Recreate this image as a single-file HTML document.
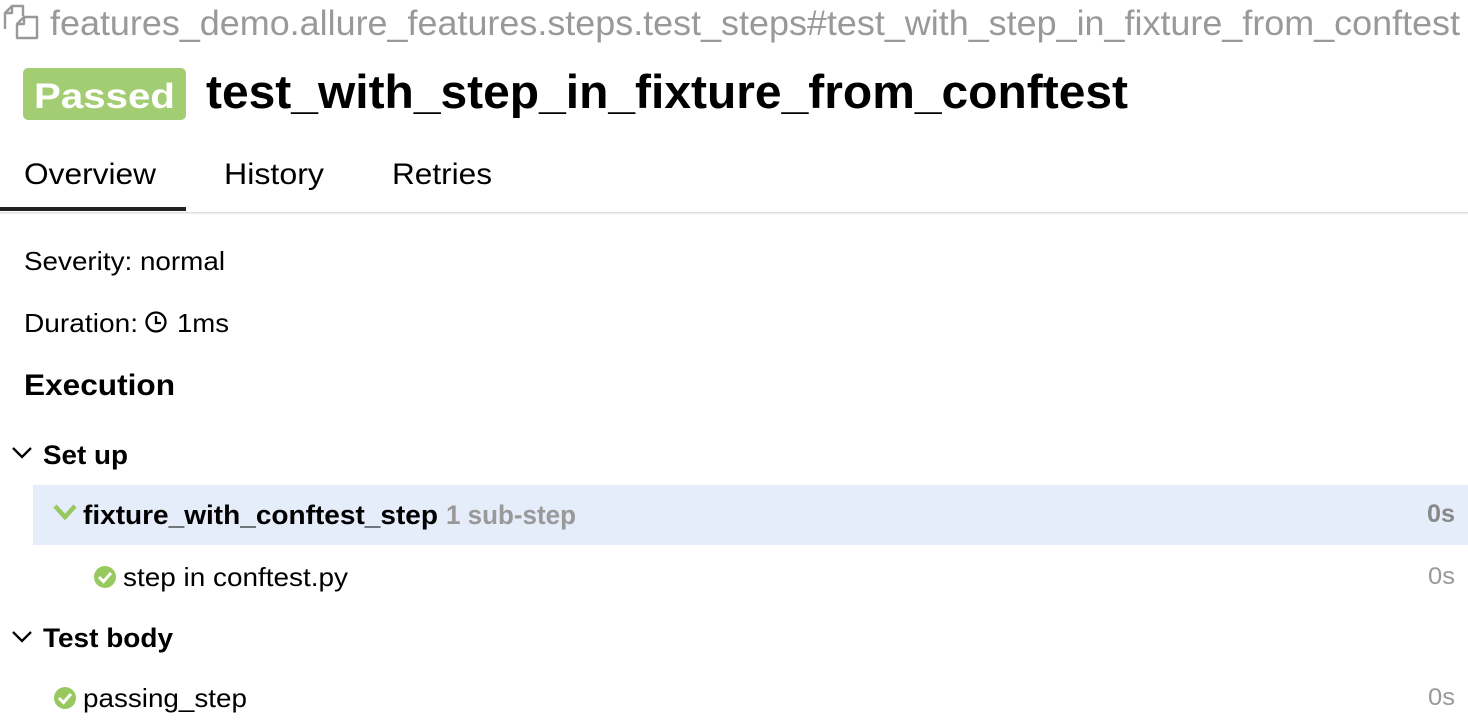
<!DOCTYPE html>
<html><head><style>
body{margin:0;background:#fff;width:1468px;height:728px;overflow:hidden}
svg{display:block;font-family:"Liberation Sans",Arial,sans-serif}
</style></head><body>
<svg width="1468" height="728" viewBox="0 0 1468 728">
<g fill="none" stroke="#999" stroke-width="2.4" stroke-linejoin="round">
<path d="M5 29 V13 L12 6 H23 V16"/>
<path d="M5 13 H12 V6"/>
<path d="M17 38 V24 L24 17 H37 V38 Z"/>
<path d="M17 24 H24 V17"/>
</g>
<text x="50" y="35" font-size="35" fill="#999" textLength="1410" lengthAdjust="spacingAndGlyphs">features_demo.allure_features.steps.test_steps#test_with_step_in_fixture_from_conftest</text>
<rect x="23" y="68" width="163" height="52" rx="5" fill="#a3cd72"/>
<text x="34" y="108" font-size="35" font-weight="bold" fill="#fff" textLength="141" lengthAdjust="spacingAndGlyphs">Passed</text>
<text x="206" y="108" font-size="47" font-weight="bold" fill="#000" textLength="922" lengthAdjust="spacingAndGlyphs">test_with_step_in_fixture_from_conftest</text>
<text x="24" y="184" font-size="30" fill="#000" textLength="132" lengthAdjust="spacingAndGlyphs">Overview</text>
<text x="224" y="184" font-size="30" fill="#000" textLength="100" lengthAdjust="spacingAndGlyphs">History</text>
<text x="392" y="184" font-size="30" fill="#000" textLength="100" lengthAdjust="spacingAndGlyphs">Retries</text>
<rect x="0" y="212" width="1468" height="1.5" fill="#ddd"/>
<rect x="0" y="207" width="186" height="4" fill="#222"/>
<text x="24" y="270" font-size="26" fill="#000" textLength="201" lengthAdjust="spacingAndGlyphs">Severity: normal</text>
<text x="24" y="332" font-size="26" fill="#000" textLength="114" lengthAdjust="spacingAndGlyphs">Duration:</text>
<circle cx="156" cy="322" r="9.5" fill="none" stroke="#000" stroke-width="2.3"/>
<path d="M156 316 V323 H161" fill="none" stroke="#000" stroke-width="2.3"/>
<text x="177" y="332" font-size="26" fill="#000" textLength="52" lengthAdjust="spacingAndGlyphs">1ms</text>
<text x="24" y="395" font-size="30" font-weight="bold" fill="#000" textLength="151" lengthAdjust="spacingAndGlyphs">Execution</text>
<path d="M13 448 L22 457 L31 448" fill="none" stroke="#000" stroke-width="2.3"/>
<text x="43" y="464" font-size="27" font-weight="bold" fill="#000" textLength="85" lengthAdjust="spacingAndGlyphs">Set up</text>
<rect x="33" y="485" width="1435" height="60" fill="#e5ecfa"/>
<path d="M55 506 L65 517 L75 506" fill="none" stroke="#97c95f" stroke-width="4.5"/>
<text x="83" y="524" font-size="27" font-weight="bold" fill="#000" textLength="355" lengthAdjust="spacingAndGlyphs">fixture_with_conftest_step</text>
<text x="446" y="524" font-size="27" font-weight="bold" fill="#999" textLength="130" lengthAdjust="spacingAndGlyphs">1 sub-step</text>
<text x="1427" y="522" font-size="25" font-weight="bold" fill="#888" textLength="28" lengthAdjust="spacingAndGlyphs">0s</text>
<circle cx="105" cy="577" r="11" fill="#97c95f"/>
<path d="M99 577 L103.5 581.5 L111 573" fill="none" stroke="#fff" stroke-width="3"/>
<text x="123" y="586" font-size="26" fill="#000" textLength="225" lengthAdjust="spacingAndGlyphs">step in conftest.py</text>
<text x="1428" y="584" font-size="24" fill="#999" textLength="27" lengthAdjust="spacingAndGlyphs">0s</text>
<path d="M13 632 L22 641 L31 632" fill="none" stroke="#000" stroke-width="2.3"/>
<text x="43" y="647" font-size="27" font-weight="bold" fill="#000" textLength="130" lengthAdjust="spacingAndGlyphs">Test body</text>
<circle cx="65" cy="698" r="11" fill="#97c95f"/>
<path d="M59 698 L63.5 702.5 L71 694" fill="none" stroke="#fff" stroke-width="3"/>
<text x="83" y="707" font-size="26" fill="#000" textLength="164" lengthAdjust="spacingAndGlyphs">passing_step</text>
<text x="1428" y="705" font-size="24" fill="#999" textLength="27" lengthAdjust="spacingAndGlyphs">0s</text>
</svg>
</body></html>
